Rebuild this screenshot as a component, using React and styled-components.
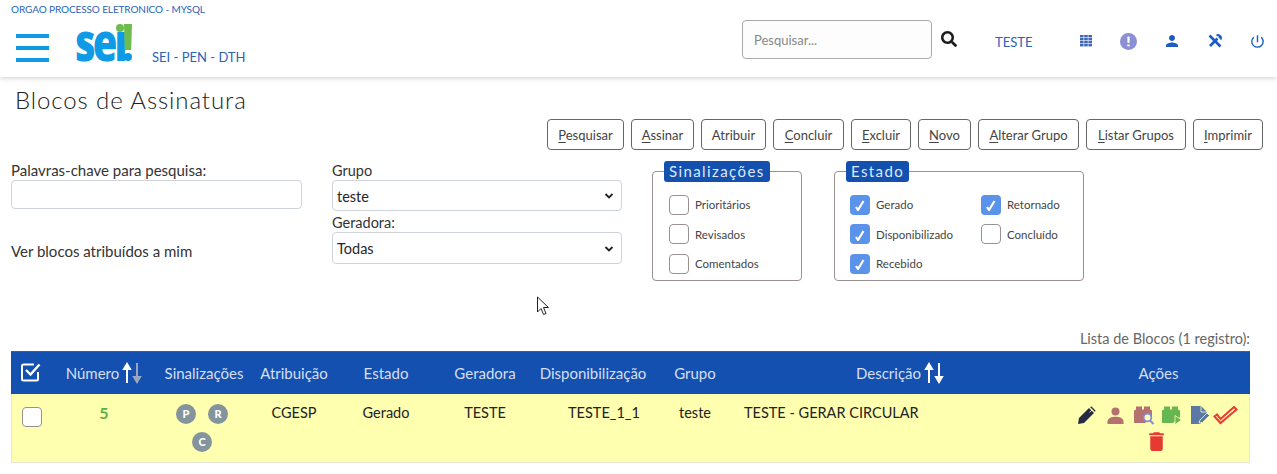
import styled, {createGlobalStyle} from 'styled-components';
import {FaSearch} from 'react-icons/fa';
import {MdPerson, MdPowerSettingsNew, MdDelete} from 'react-icons/md';

const blue = '#1450b0';
const linkBlue = '#2a62bb';
const font = 'Lato, "Open Sans", sans-serif';

const GlobalStyle = createGlobalStyle`
  html, body {
    margin: 0;
    padding: 0;
    background: #fff;
    font-family: ${font};
    color: #212529;
    overflow: hidden;
  }
`;

const Page = styled.div`
  width: 1277px;
  height: 474px;
  position: relative;
  overflow: hidden;
`;

const TopBar = styled.header`
  height: 77px;
  box-shadow: 0 1px 5px rgba(0, 0, 0, 0.2);
  padding: 3px 0 0 11px;
  box-sizing: border-box;
  display: flex;
  flex-flow: column;
`;

const OrgName = styled.div`
  font-size: 10px;
  line-height: 12px;
  color: ${linkBlue};
  letter-spacing: -0.1px;
`;

const BarRow = styled.div`
  display: flex;
  align-items: flex-start;
  flex: 1;
  margin-right: -2px;
`;

const Burger = styled.div`
  width: 33px;
  margin: 19px 0 0 5px;
  display: flex;
  flex-flow: column;
  gap: 8px;
  span {
    height: 4px;
    background: #0f9ae6;
    display: block;
  }
`;

const Logo = styled.div`
  margin: 9px 0 0 28px;
  width: 56px;
  height: 37px;
  position: relative;
  font-family: "Open Sans", sans-serif;
  font-weight: 800;
  font-size: 47px;
  line-height: 37px;
  letter-spacing: -3.5px;
  color: #0f9ae6;
`;

const LogoLetters = styled.span`
  display: inline-block;
  margin-left: -2px;
  transform: scale(0.85, 1.1);
  transform-origin: left 80%;
`;

const LogoDot = styled.i`
  position: absolute;
  border-radius: 50%;
  background: ${props => props.color};
  width: ${props => props.size}px;
  height: ${props => props.size}px;
  left: ${props => props.left}px;
  top: ${props => props.top}px;
`;

const LogoBar = styled.i`
  position: absolute;
  left: 47px;
  top: 0;
  width: 8px;
  height: 26px;
  background: #6fbb4c;
  clip-path: polygon(0 0, 100% 0, 90% 100%, 10% 100%);
`;

const SiteName = styled.div`
  margin: 34px 0 0 19px;
  font-size: 13px;
  line-height: 16px;
  color: ${linkBlue};
`;

const SearchBox = styled.input`
  margin: 5px 0 0 auto;
  width: 190px;
  height: 39px;
  box-sizing: border-box;
  border: 1px solid #aaa;
  border-radius: 4px;
  padding: 0 11px;
  background: #fdfdfd;
  font-family: ${font};
  font-size: 13px;
  &::placeholder { color: #888; }
`;

const SearchIcon = styled(FaSearch)`
  margin: 16px 0 0 9px;
  width: 16px;
  height: 16px;
  color: #1d1d1d;
`;

const UserName = styled.div`
  margin: 19px 0 0 38px;
  width: 69px;
  font-size: 13px;
  line-height: 16px;
  color: ${linkBlue};
`;

const IconSlot = styled.div`
  width: 43px;
  height: 18px;
  margin-top: 17px;
  display: flex;
  justify-content: center;
  align-items: center;
  color: ${props => props.color || '#1b5cc0'};
`;

const Title = styled.h1`
  margin: 9px 0 0 15px;
  font-size: 24px;
  line-height: 28px;
  font-weight: 300;
  color: #222;
  letter-spacing: 0.9px;
`;

const Buttons = styled.div`
  display: flex;
  justify-content: flex-end;
  gap: 7px;
  padding-right: 14px;
  margin-top: 5px;
`;

const Btn = styled.button`
  height: 31px;
  width: ${props => props.w}px;
  padding: 0;
  background: #fff;
  border: 1px solid #666;
  border-radius: 4px;
  font-family: ${font};
  font-size: 13px;
  color: #444;
  u { text-underline-offset: 2px; }
`;

const Filters = styled.section`
  display: grid;
  grid-template-columns: 291px 290px 150px 252px;
  column-gap: 30px;
  padding: 11px 0 0 11px;
  height: 180px;
  box-sizing: border-box;
  align-items: start;
`;

const Column = styled.div`
  display: flex;
  flex-flow: column;
`;

const Label = styled.label`
  font-size: 14.5px;
  line-height: 19px;
  color: #333;
`;

const TextField = styled.div`
  height: 29px;
  border: 1px solid #ced4da;
  border-radius: 4px;
  box-sizing: border-box;
`;

const WideLabel = styled(Label)`
  font-size: 15px;
`;

const AssignedLabel = styled(WideLabel)`
  margin-top: 33px;
  line-height: 18px;
`;

const SelectField = styled.div`
  height: ${props => props.h}px;
  margin-bottom: 2px;
  border: 1px solid #ced4da;
  border-radius: 4px;
  box-sizing: border-box;
  display: flex;
  align-items: center;
  justify-content: space-between;
  padding: 1px 4px 0 4px;
  font-size: 14.5px;
  color: #212529;
`;

const Group = styled.fieldset`
  margin: 10px 0 0 ${props => props.offset || 0}px;
  padding: 0;
  height: 110px;
  box-sizing: border-box;
  border: 1px solid #9a9092;
  border-radius: 4px;
  position: relative;
`;

const GroupTitle = styled.div`
  position: absolute;
  top: -11px;
  left: 11px;
  height: 21px;
  line-height: 21px;
  padding: 0 5px;
  background: ${blue};
  border-radius: 3px;
  color: #dfe8f7;
  font-size: 15px;
  letter-spacing: 1.4px;
`;

const Options = styled.div`
  display: grid;
  grid-template-columns: ${props => props.cols};
  grid-auto-rows: 29.5px;
  padding: 18px 0 0 ${props => props.left}px;
`;

const Option = styled.div`
  display: flex;
  align-items: center;
  gap: 6px;
  font-size: 11.5px;
  color: #444;
`;

const Check = styled.span`
  width: 20px;
  height: 20px;
  box-sizing: border-box;
  border-radius: 4px;
  border: ${props => props.on ? 'none' : '1px solid #9a9092'};
  background: ${props => props.on ? '#5b92ea' : '#fff'};
  display: inline-flex;
  align-items: center;
  justify-content: center;
  flex-shrink: 0;
`;

const ListCaption = styled.div`
  text-align: right;
  padding-right: 27px;
  font-size: 14.5px;
  line-height: 18px;
  color: #666;
  height: 21px;
`;

const Grid = styled.table`
  margin-left: 11px;
  width: 1239px;
  border-collapse: separate;
  border-spacing: 0;
  table-layout: fixed;
`;

const Head = styled.th`
  height: 42px;
  padding: 0 ${props => props.pad || 0}px 0 0;
  background: ${blue};
  border-top: 1px solid #4f6d12;
  color: #d6dff0;
  font-weight: 400;
  font-size: 15px;
  text-align: center;
  white-space: nowrap;
`;

const HeadInner = styled.span`
  display: inline-flex;
  align-items: center;
  gap: 3px;
`;

const Row = styled.tr`
  background: #ffffb0;
  td { border-bottom: 1px solid #e6e6d8; }
  td:first-child { border-left: 1px solid #e6e6d8; }
  td:last-child { border-right: 1px solid #e6e6d8; }
`;

const Cell = styled.td`
  height: 69px;
  box-sizing: border-box;
  padding: 5px 0 0 ${props => props.shift || 0}px;
  vertical-align: top;
  text-align: ${props => props.align || 'center'};
  font-size: 14.5px;
  line-height: 27px;
  color: #222;
`;

const RowNumber = styled.span`
  color: #5cae49;
  font-weight: 700;
  font-size: 16px;
`;

const Badges = styled.div`
  width: 70px;
  margin: 5px auto 0;
  position: relative;
  left: -2px;
  display: flex;
  flex-wrap: wrap;
  justify-content: center;
  gap: 8px 12px;
`;

const Badge = styled.span`
  width: 20px;
  height: 20px;
  border-radius: 50%;
  background: #84949c;
  color: #fff;
  font-size: 11px;
  font-weight: 900;
  line-height: 20px;
  text-align: center;
`;

const Actions = styled.div`
  width: 172px;
  margin: 6px auto 0 4px;
  display: flex;
  flex-wrap: wrap;
  justify-content: center;
  align-items: center;
  column-gap: 7px;
  row-gap: 4px;
  line-height: 0;
  box-sizing: border-box;
  svg:nth-child(1) { margin-right: 4px; }
  svg:nth-child(2) { margin-right: 3px; }
  svg:nth-child(5) { margin-right: -4px; }
`;

const RowCheck = styled(Check)`
  margin: 8px 0 0 -6px;
  vertical-align: top;
`;

const Trash = styled(MdDelete)`
  width: 25px;
  height: 25px;
  margin-right: 2px;
  color: #e53a30;
`;

const Pointer = styled.svg`
  position: absolute;
  left: 536px;
  top: 296px;
`;

const Tick = () => (
  <svg width="12" height="13" viewBox="0 0 12 13">
    <path d="M2 9l2 3L9.500 3" fill="none" stroke="#fff" strokeWidth="2.2"/>
  </svg>
);

const Chevron = () => (
  <svg width="16" height="16" viewBox="0 0 16 16">
    <path d="M4.5 6l3.5 3.5L11.5 6" fill="none" stroke="#222" strokeWidth="1.8"/>
  </svg>
);

const GridIcon = () => (
  <svg width="12" height="12" viewBox="0 0 12 12" fill="#3f66b8">
    {[0, 3, 6, 9].map(y => [0, 4.2, 8.4].map(x => (
      <rect key={`${x}-${y}`} x={x} y={y} width="3.6" height="2.4"/>
    )))}
  </svg>
);

const AlertIcon = () => (
  <svg width="17" height="17" viewBox="0 0 17 17">
    <circle cx="8.5" cy="8.5" r="8.5" fill="#8b8fd6"/>
    <rect x="7.4" y="3.5" width="2.2" height="6.5" rx="0.8" fill="#fff"/>
    <circle cx="8.5" cy="12.4" r="1.2" fill="#fff"/>
  </svg>
);

const ToolsIcon = () => (
  <svg width="14" height="14" viewBox="0 0 14 14" fill="none" stroke="#1b5cc0">
    <path d="M1.500 1.500l11 11" strokeWidth="2.600"/>
    <path d="M2 12L9.500 4.500" strokeWidth="2.600"/>
    <path d="M13 1.500L10.800 3.700M8.500 1.500c1.200-.5 2.300-.5 3 0M12.500 5.500c.5-.7.500-1.800 0-3" strokeWidth="2"/>
  </svg>
);

const Sort = ({dim}) => (
  <svg width="20" height="22" viewBox="0 0 20 22">
    <path d="M5 21V3M2 7l3-5 3 5z" stroke="#fff" strokeWidth="2" fill="#fff"/>
    <path d="M15 1v18M12 15l3 5 3-5z" stroke={dim ? '#9aa6bd' : '#fff'} strokeWidth="2" fill={dim ? '#9aa6bd' : '#fff'}/>
  </svg>
);

const HeadCheck = () => (
  <svg width="20" height="20" viewBox="0 0 20 20" fill="none">
    <path d="M17 10v7a1.5 1.5 0 0 1-1.5 1.5h-13A1.5 1.5 0 0 1 1 17V4a1.5 1.5 0 0 1 1.5-1.5H13" stroke="#fff" strokeWidth="2"/>
    <path d="M5 8l4.5 4.5L18.500 2.500" stroke="#fff" strokeWidth="2.400"/>
  </svg>
);

const PenIcon = () => (
  <svg width="19" height="19" viewBox="0 0 19 19">
    <path d="M1 18l1-6L12 2l5 5L7 17z" fill="#252b45"/>
    <path d="M13 1l1.500-.5 4 4L18 6z" fill="#252b45"/>
    <path d="M12.500 6.500l3-3" stroke="#ffffb0" strokeWidth="0.8"/>
  </svg>
);

const PersonIcon = () => (
  <svg width="17" height="17" viewBox="0 0 17 17" fill="#b5716f">
    <circle cx="8.500" cy="4.500" r="4"/>
    <path d="M0.500 17v-2.500C0.500 11 5 9.800 8.500 9.800s8 1.200 8 4.700V17z"/>
  </svg>
);

const Blocks = ({color}) => (
  <path fill={color} d="M0 18V5.500L2 4.500V1.500h6V4.500h2V1.500h6V4.500l2 1V12l-7 6z"/>
);

const BlockSearchIcon = () => (
  <svg width="21" height="20" viewBox="0 0 21 20">
    <Blocks color="#b5716f"/>
    <circle cx="13.500" cy="12.500" r="3.800" fill="#ffffb0" stroke="#8189e0" strokeWidth="1.800"/>
    <path d="M16 15.500l3.500 3.500" stroke="#8189e0" strokeWidth="2"/>
  </svg>
);

const BlockPlayIcon = () => (
  <svg width="21" height="20" viewBox="0 0 21 20">
    <Blocks color="#66b651"/>
    <path d="M13 10.500l6.500 4.500-6.500 4.500z" fill="#66b651" stroke="#ffffb0" strokeWidth="0.8"/>
  </svg>
);

const DocIcon = () => (
  <svg width="20" height="20" viewBox="0 0 20 20">
    <path d="M1 1h10l6 6v5l-7 7H1z" fill="#5a7aa5"/>
    <path d="M11 1v6h6" fill="none" stroke="#ffffb0" strokeWidth="0.8"/>
    <path d="M9 18l1-3 7-7 2.500 2.500-7 7z" fill="#5a7aa5" stroke="#ffffb0" strokeWidth="0.8"/>
  </svg>
);

const DoubleCheckIcon = () => (
  <svg width="25" height="19" viewBox="0 0 25 19" fill="none">
    <path d="M1.500 10.500l6 6.500L23.500 3.500l-2.500-2.500L7.500 13l-3.500-4.500z" stroke="#ea3a32" strokeWidth="2"/>
  </svg>
);

const buttons = [
  ['P', 'esquisar', 77],
  ['A', 'ssinar', 63],
  ['', 'Atribuir', 65],
  ['C', 'oncluir', 71],
  ['E', 'xcluir', 60],
  ['N', 'ovo', 53],
  ['A', 'lterar Grupo', 101],
  ['L', 'istar Grupos', 100],
  ['I', 'mprimir', 70],
];

const sinalizacoes = [['Prioritários', false], ['Revisados', false], ['Comentados', false]];
const estados = [
  ['Gerado', true],
  ['Retornado', true],
  ['Disponibilizado', true],
  ['Concluído', false],
  ['Recebido', true],
];

const columns = [46, 94, 106, 74, 110, 88, 128, 76, 334, 183];

export default function App() {
  return (
    <Page>
      <GlobalStyle/>
      <TopBar>
        <OrgName>ORGAO PROCESSO ELETRONICO - MYSQL</OrgName>
        <BarRow>
          <Burger><span/><span/><span/></Burger>
          <Logo>
            <LogoLetters>seı</LogoLetters>
            <LogoDot color="#6fbb4c" size={8} left={39} top={0}/>
            <LogoBar/>
            <LogoDot color="#0f9ae6" size={8} left={47} top={29}/>
          </Logo>
          <SiteName>SEI - PEN - DTH</SiteName>
          <SearchBox placeholder="Pesquisar..."/>
          <SearchIcon/>
          <UserName>TESTE</UserName>
          <IconSlot><GridIcon/></IconSlot>
          <IconSlot><AlertIcon/></IconSlot>
          <IconSlot><MdPerson size={18}/></IconSlot>
          <IconSlot><ToolsIcon/></IconSlot>
          <IconSlot><MdPowerSettingsNew size={17}/></IconSlot>
        </BarRow>
      </TopBar>

      <Title>Blocos de Assinatura</Title>

      <Buttons>
        {buttons.map(([key, rest, w]) => (
          <Btn key={key + rest} w={w}>{key && <u>{key}</u>}{rest}</Btn>
        ))}
      </Buttons>

      <Filters>
        <Column>
          <WideLabel>Palavras-chave para pesquisa:</WideLabel>
          <TextField/>
          <AssignedLabel>Ver blocos atribuídos a mim</AssignedLabel>
        </Column>
        <Column>
          <Label>Grupo</Label>
          <SelectField h={31}>teste<Chevron/></SelectField>
          <Label>Geradora:</Label>
          <SelectField h={32}>Todas<Chevron/></SelectField>
        </Column>
        <Group>
          <GroupTitle>Sinalizações</GroupTitle>
          <Options cols="1fr" left={16}>
            {sinalizacoes.map(([name, on]) => (
              <Option key={name}><Check on={on}/>{name}</Option>
            ))}
          </Options>
        </Group>
        <Group offset={2}>
          <GroupTitle>Estado</GroupTitle>
          <Options cols="131px 1fr" left={15}>
            {estados.map(([name, on]) => (
              <Option key={name}><Check on={on}>{on && <Tick/>}</Check>{name}</Option>
            ))}
          </Options>
        </Group>
      </Filters>

      <ListCaption>Lista de Blocos (1 registro):</ListCaption>

      <Grid>
        <colgroup>
          {columns.map((w, i) => <col key={i} width={w}/>)}
        </colgroup>
        <thead>
          <tr>
            <Head pad={6}><HeadCheck/></Head>
            <Head><HeadInner>Número<Sort dim/></HeadInner></Head>
            <Head>Sinalizações</Head>
            <Head>Atribuição</Head>
            <Head>Estado</Head>
            <Head>Geradora</Head>
            <Head>Disponibilização</Head>
            <Head>Grupo</Head>
            <Head><HeadInner>Descrição<Sort/></HeadInner></Head>
            <Head>Ações</Head>
          </tr>
        </thead>
        <tbody>
          <Row>
            <Cell><RowCheck/></Cell>
            <Cell><RowNumber>5</RowNumber></Cell>
            <Cell>
              <Badges>
                <Badge>P</Badge>
                <Badge>R</Badge>
                <Badge>C</Badge>
              </Badges>
            </Cell>
            <Cell>CGESP</Cell>
            <Cell>Gerado</Cell>
            <Cell>TESTE</Cell>
            <Cell shift={22}>TESTE_1_1</Cell>
            <Cell>teste</Cell>
            <Cell align="left" shift={11}>TESTE - GERAR CIRCULAR</Cell>
            <Cell>
              <Actions>
                <PenIcon/>
                <PersonIcon/>
                <BlockSearchIcon/>
                <BlockPlayIcon/>
                <DocIcon/>
                <DoubleCheckIcon/>
                <Trash/>
              </Actions>
            </Cell>
          </Row>
        </tbody>
      </Grid>

      <Pointer width="14" height="21" viewBox="0 0 14 21">
        <path d="M1.500 1v15l3.500-3.500 2.500 6 2.500-1-2.500-6h5z" fill="#fff" stroke="#222" strokeWidth="1"/>
      </Pointer>
    </Page>
  );
}
